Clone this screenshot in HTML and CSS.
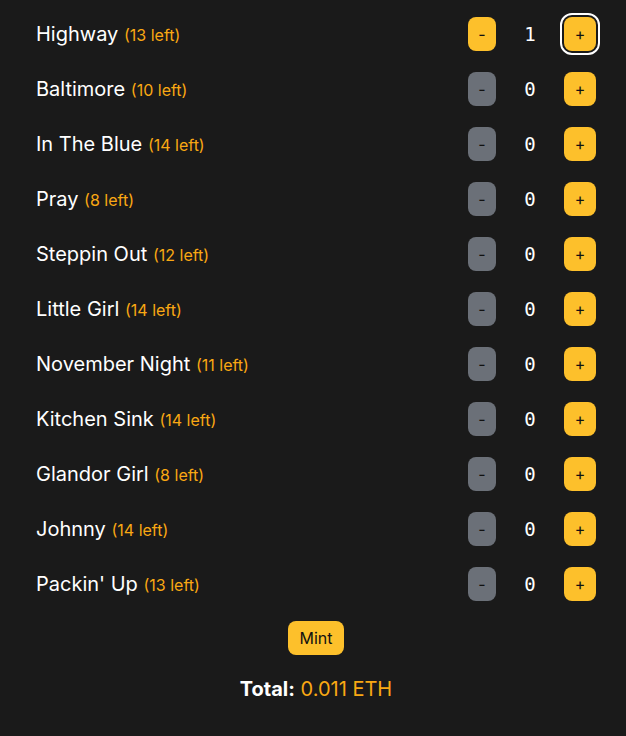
FILE: index.html
```html
<!DOCTYPE html>
<html lang="en">
<head>
  <meta charset="UTF-8" />
  <meta name="viewport" content="width=device-width, initial-scale=1.0" />
  <title>Mint</title>
  <link rel="stylesheet" href="styles.css">
</head>
<body>
  <main class="mint-panel">
    <ul class="tracks">
      <li class="track">
        <span class="track-name">Highway <small class="left">(13 left)</small></span>
        <div class="counter">
          <button class="btn btn-minus active">-</button>
          <span class="qty">1</span>
          <button class="btn btn-plus focused">+</button>
        </div>
      </li>
      <li class="track">
        <span class="track-name">Baltimore <small class="left">(10 left)</small></span>
        <div class="counter">
          <button class="btn btn-minus">-</button>
          <span class="qty">0</span>
          <button class="btn btn-plus">+</button>
        </div>
      </li>
      <li class="track">
        <span class="track-name">In The Blue <small class="left">(14 left)</small></span>
        <div class="counter">
          <button class="btn btn-minus">-</button>
          <span class="qty">0</span>
          <button class="btn btn-plus">+</button>
        </div>
      </li>
      <li class="track">
        <span class="track-name">Pray <small class="left">(8 left)</small></span>
        <div class="counter">
          <button class="btn btn-minus">-</button>
          <span class="qty">0</span>
          <button class="btn btn-plus">+</button>
        </div>
      </li>
      <li class="track">
        <span class="track-name">Steppin Out <small class="left">(12 left)</small></span>
        <div class="counter">
          <button class="btn btn-minus">-</button>
          <span class="qty">0</span>
          <button class="btn btn-plus">+</button>
        </div>
      </li>
      <li class="track">
        <span class="track-name">Little Girl <small class="left">(14 left)</small></span>
        <div class="counter">
          <button class="btn btn-minus">-</button>
          <span class="qty">0</span>
          <button class="btn btn-plus">+</button>
        </div>
      </li>
      <li class="track">
        <span class="track-name">November Night <small class="left">(11 left)</small></span>
        <div class="counter">
          <button class="btn btn-minus">-</button>
          <span class="qty">0</span>
          <button class="btn btn-plus">+</button>
        </div>
      </li>
      <li class="track">
        <span class="track-name">Kitchen Sink <small class="left">(14 left)</small></span>
        <div class="counter">
          <button class="btn btn-minus">-</button>
          <span class="qty">0</span>
          <button class="btn btn-plus">+</button>
        </div>
      </li>
      <li class="track">
        <span class="track-name">Glandor Girl <small class="left">(8 left)</small></span>
        <div class="counter">
          <button class="btn btn-minus">-</button>
          <span class="qty">0</span>
          <button class="btn btn-plus">+</button>
        </div>
      </li>
      <li class="track">
        <span class="track-name">Johnny <small class="left">(14 left)</small></span>
        <div class="counter">
          <button class="btn btn-minus">-</button>
          <span class="qty">0</span>
          <button class="btn btn-plus">+</button>
        </div>
      </li>
      <li class="track">
        <span class="track-name">Packin' Up <small class="left">(13 left)</small></span>
        <div class="counter">
          <button class="btn btn-minus">-</button>
          <span class="qty">0</span>
          <button class="btn btn-plus">+</button>
        </div>
      </li>
    </ul>

    <div class="mint-row">
      <button class="mint-btn">Mint</button>
    </div>
    <p class="total"><strong>Total:</strong> <span class="price">0.011 ETH</span></p>
  </main>
</body>
</html>
```

FILE: styles.css
```css
/* --- Reset & base ---------------------------------------------------- */
* { box-sizing: border-box; margin: 0; padding: 0; }
body { font-family: Inter, "Noto Sans", sans-serif; background: #1a1a1a; color: #fff; }

/* --- Track list ------------------------------------------------------ */
.mint-panel { padding: 6px 30px 0 36px; }
.tracks { list-style: none; }
.track {
  height: 55px;
  display: flex;
  align-items: center;
  justify-content: space-between;
}
.track-name { font-size: 20px; font-weight: 400; }
.left { font-size: 16px; color: #f9a813; font-weight: 400; }

.counter { display: flex; align-items: center; gap: 14px; }
.qty { width: 40px; text-align: center; font-family: "DejaVu Sans Mono", monospace; font-size: 19px; }

.btn {
  height: 34px;
  border: none; border-radius: 8px;
  font-family: Inter, sans-serif; font-size: 16px; color: #111;
  background: #fdc02b; cursor: pointer;
}
.btn-minus { width: 28px; background: #6b7078; }
.btn-minus.active { background: #fdc02b; }
.btn-plus { width: 32px; }
.btn.focused { outline: 2px solid #fff; outline-offset: 2px; }

/* --- Mint + total ---------------------------------------------------- */
.mint-row { display: flex; justify-content: center; padding: 10px 0 0 0; }
.mint-btn {
  width: 56px; height: 34px;
  border: none; border-radius: 8px;
  background: #fdc02b; color: #111;
  font-family: Inter, sans-serif; font-size: 16px; cursor: pointer;
}
.total { text-align: center; font-size: 20px; margin-top: 22px; }
.total strong { font-weight: 700; }
.price { color: #f9a813; }
```
